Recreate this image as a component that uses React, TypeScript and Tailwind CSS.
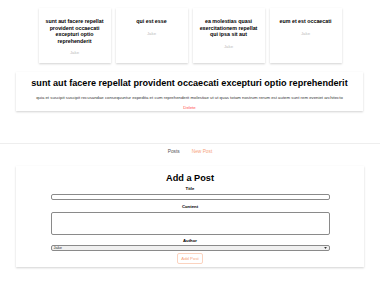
import React from "react";

const posts = [
  { title: "sunt aut facere repellat provident occaecati excepturi optio reprehenderit", author: "Jake" },
  { title: "qui est esse", author: "Jake" },
  { title: "ea molestias quasi exercitationem repellat qui ipsa sit aut", author: "Jake" },
  { title: "eum et est occaecati", author: "Jake" },
];

export default function App() {
  return (
    <div
      className="w-[380px] h-[285px] bg-white overflow-hidden"
      style={{ fontFamily: '"Liberation Sans", Arial, sans-serif' }}
    >
      <div className="flex justify-center gap-[5px] pt-[8px]">
        {posts.map((p, i) => (
          <div
            key={i}
            className="w-[72px] bg-white shadow-[0_1px_2px_rgba(0,0,0,0.18)] pt-[10px] pb-[8px] px-[5px] flex flex-col items-center"
          >
            <div className="text-[5.3px] leading-[6.6px] font-bold text-black text-center">{p.title}</div>
            <div className="text-[4.3px] leading-[5px] text-[#bbbbbb] mt-[6px]">{p.author}</div>
          </div>
        ))}
      </div>

      <div className="mx-[16px] mt-[9px] w-[347px] bg-white shadow-[0_1px_2px_rgba(0,0,0,0.18)] pt-[6px] pb-[1px] flex flex-col items-center">
        <div className="text-[9.1px] leading-[11px] font-bold text-black text-center whitespace-nowrap">
          sunt aut facere repellat provident occaecati excepturi optio reprehenderit
        </div>
        <div className="text-[4.3px] leading-[5px] text-[#333] mt-[6px] whitespace-nowrap">
          quia et suscipit suscipit recusandae consequuntur expedita et cum reprehenderit molestiae ut ut quas totam nostrum rerum est autem sunt rem eveniet architecto
        </div>
        <div className="text-[4.3px] leading-[5px] text-[#ff4a4a] mt-[5px]">Delete</div>
      </div>

      <div className="mt-[32px] h-px bg-[#eeeeee]" />

      <div className="flex justify-center gap-[12px] mt-[5px] text-[4.8px] leading-[6px]">
        <span className="text-[#555]">Posts</span>
        <span className="text-[#f6a37c]">New Post</span>
      </div>

      <div className="mx-[16px] mt-[11px] w-[348px] bg-white shadow-[0_1px_2px_rgba(0,0,0,0.18)] pt-[7px] pb-[2px] flex flex-col items-center">
        <div className="text-[9.2px] leading-[11px] font-bold text-black">Add a Post</div>
        <div className="text-[4.3px] leading-[5px] font-bold text-black mt-[2px]">Title</div>
        <div className="mt-[3px] w-[279px] h-[6px] border border-[#8a8a8a] rounded-[2px] bg-white" />
        <div className="text-[4.3px] leading-[5px] font-bold text-black mt-[4px]">Content</div>
        <div className="mt-[3px] w-[279px] h-[23px] border border-[#8a8a8a] rounded-[2px] bg-white" />
        <div className="text-[4.3px] leading-[5px] font-bold text-black mt-[3px]">Author</div>
        <div className="mt-[2px] w-[279px] h-[6px] border border-[#8a8a8a] rounded-[2px] bg-[#f0f0f0] flex items-center justify-between px-[2px]">
          <span className="text-[4px] leading-[4px] text-[#333]">Jake</span>
          <svg width="3" height="2" viewBox="0 0 4 3">
            <path d="M0 0 L4 0 L2 3 Z" fill="#333" />
          </svg>
        </div>
        <div className="mt-[2px] mb-[1px] w-[26px] h-[11px] border border-[#fbd3bf] rounded-[2px] flex items-center justify-center text-[4.3px] text-[#f6a37c]">
          Add Post
        </div>
      </div>
    </div>
  );
}
